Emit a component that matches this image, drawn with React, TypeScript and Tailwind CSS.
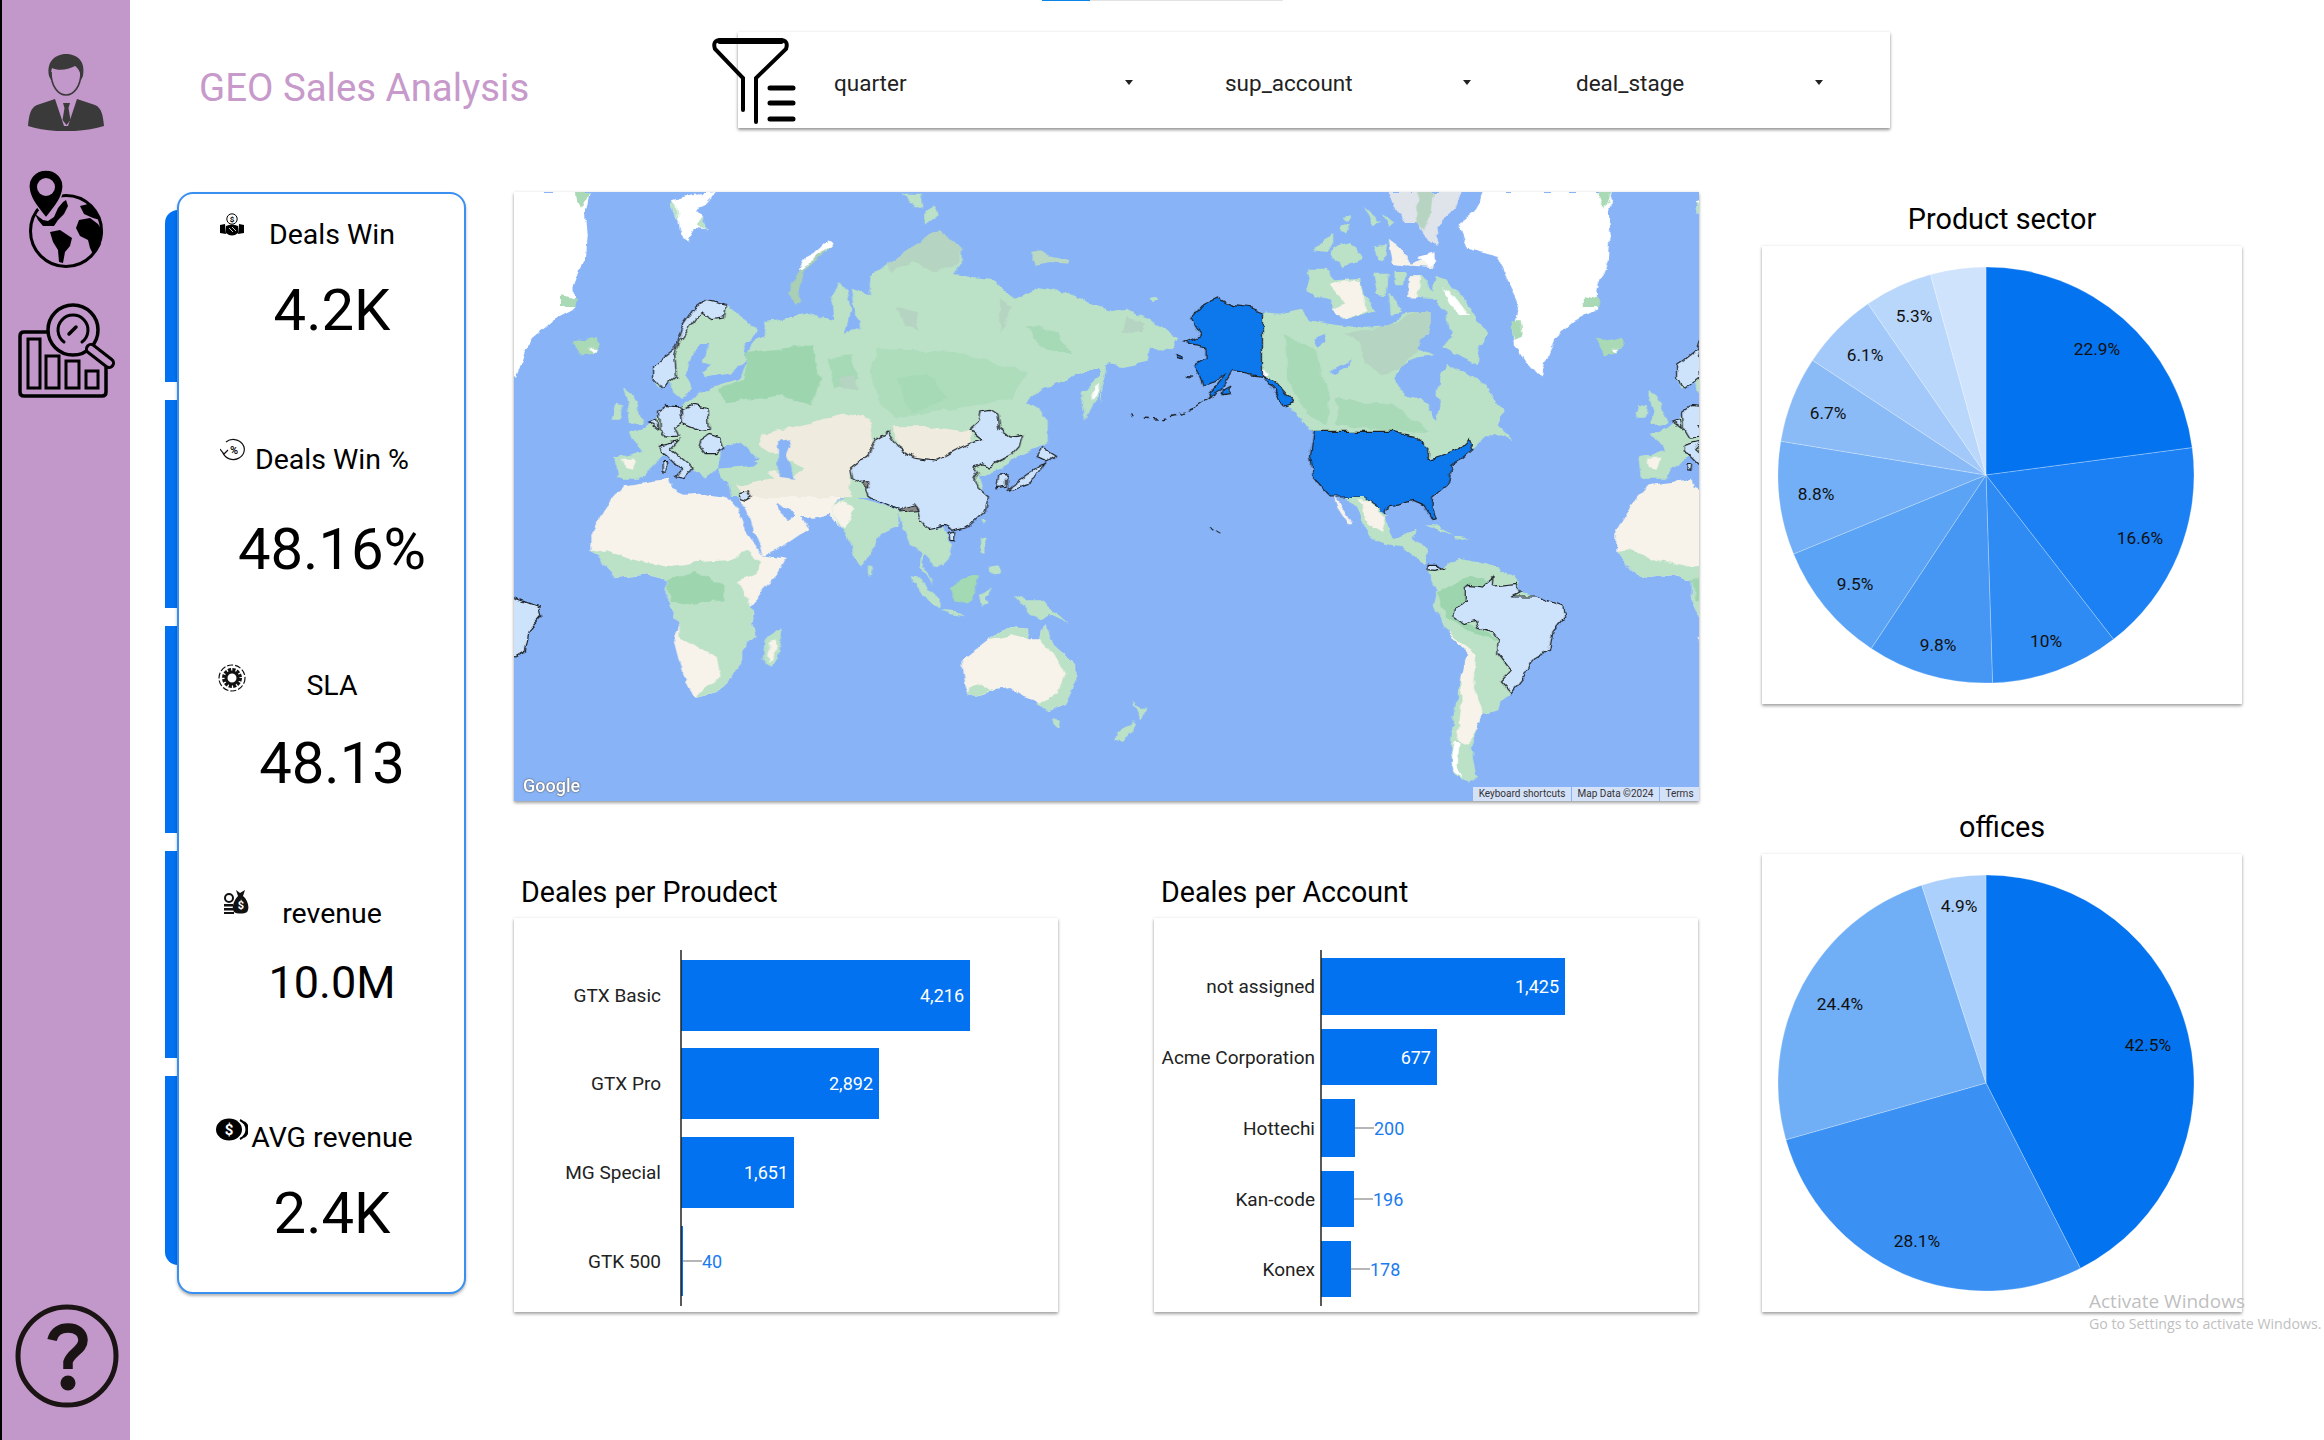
const SIDE = "#c297c9";
const LAND = "#bbe2c7";
const DEEP = "#9dd6ae";
const SAND = "#f7f3ea";
const PALE = "#cde2fb";
const LINE = "#1f2328";

function PersonIcon() {
  return (
    <svg width="76" height="77" viewBox="0 0 76 77" fill="#3a3a3a">
      <path d="M21 22 C18 6 29 0 38 0 C48 0 58 6 55 22 L53 26 C53 18 50 14 47 12 C40 16 30 17 24 14 C23 17 23 20 23 26Z" />
      <path d="M23 18 C23 32 30 41 38 41 C46 41 53 32 53 18" fill="none" stroke="#3a3a3a" strokeWidth="1.6" />
      <path d="M0 72 C1 62 2 54 9 51 L27 45 L36 72 L40 72 L49 45 L67 51 C74 54 75 62 76 72 C55 79 20 79 0 72Z" />
      <path d="M35 49 H42 L40.5 54 L42.5 66 L38.5 71 L34.5 66 L36.5 54Z" />
    </svg>
  );
}

function GlobeIcon() {
  return (
    <svg width="75" height="98" viewBox="0 0 75 98" fill="#000">
      <circle cx="38" cy="61" r="35.5" fill="none" stroke="#000" strokeWidth="3" />
      <path d="M7 44 L15 50 L20 51 L26 47 L30 38 L35 32 L38 30 L40 36 L36 44 L30 50 L26 56 L20 56 L15 56 L10 50Z" />
      <path d="M22 62 L32 60 L44 68 L42 76 L37 82 L35 93 L31 92 L30 80 L25 72Z" />
      <path d="M51 50 L62 48 L70 54 L75 62 L72 76 L65 84 L62 78 L60 70 L52 66 L48 58Z" />
      <path d="M52 36 L60 34 L68 42 L72 50 L65 48 L56 44Z" />
      <path d="M18 0 C7 0 0 9 1 18 C2 30 12 40 18 48 C24 40 34 30 35 18 C36 9 29 0 18 0Z" stroke={SIDE} strokeWidth="1.5" />
      <circle cx="18" cy="17" r="9" fill={SIDE} />
    </svg>
  );
}

function AnalyticsIcon() {
  return (
    <svg width="97" height="97" viewBox="0 0 97 97" fill="none" stroke="#000" strokeWidth="3.5" strokeLinecap="round">
      <path d="M29 31 H6 Q2 31 2 35 V91 Q2 95 6 95 H84 Q88 95 88 91 V66" />
      <rect x="10" y="38" width="12" height="49" strokeWidth="3" />
      <rect x="28" y="55" width="13" height="32" strokeWidth="3" />
      <rect x="48" y="60" width="13" height="27" strokeWidth="3" />
      <rect x="68" y="70" width="12" height="17" strokeWidth="3" />
      <circle cx="55" cy="29" r="25" />
      <path d="M46 41 A15 15 0 1 1 64 41" strokeWidth="3" />
      <path d="M51 33 L58 26" strokeWidth="3.5" />
      <path d="M73 48 L91 62" strokeWidth="12" />
      <path d="M73 48 L91 62" strokeWidth="6" stroke={SIDE} />
    </svg>
  );
}

function HelpIcon() {
  return (
    <svg width="104" height="104" viewBox="0 0 104 104" fill="none" stroke="#1b1414">
      <circle cx="52" cy="52" r="49" strokeWidth="5" />
      <path d="M37 36 C39 27 46 24 53 24 C62 24 68 29 68 36 C68 46 56 48 53 58 L53 65" strokeWidth="9.5" />
      <circle cx="53" cy="79" r="7.5" fill="#1b1414" stroke="none" />
    </svg>
  );
}

function FilterIcon() {
  return (
    <svg width="84" height="86" viewBox="0 0 84 86" fill="none" stroke="#000" strokeLinecap="round">
      <path d="M31 72 V40 L3 11 Q0 2 9 2 H68 Q77 2 74 11 L44 40 V84" strokeWidth="4" />
      <path d="M8 3 H69" strokeWidth="6" />
      <path d="M58 50 H81 M58 65 H81 M58 81 H81" strokeWidth="5" />
    </svg>
  );
}

function HandshakeCoin() {
  return (
    <svg width="24" height="24" viewBox="0 0 24 24">
      <circle cx="12" cy="6" r="5.2" fill="#fff" stroke="#000" strokeWidth="1" />
      <text x="12" y="9" textAnchor="middle" fontSize="8" fontWeight="700">$</text>
      <path d="M0 12 L5 11 L6 21 L0 20Z M24 12 L19 11 L18 21 L24 20Z M6 13 Q12 10 18 13 L18 20 Q12 25 6 20Z" />
      <path d="M9 15 L13 19 M12 14 L16 18" stroke="#fff" strokeWidth="0.8" />
    </svg>
  );
}

function PercentCycle() {
  return (
    <svg width="26" height="24" viewBox="0 0 26 24" fill="none" stroke="#111">
      <path d="M3 15 A11 10 0 1 0 6 4" strokeWidth="1.2" />
      <path d="M0 11 L4 16 L8 12" strokeWidth="1.2" />
      <text x="14" y="15.5" textAnchor="middle" fontSize="11" fill="#111" stroke="none" fontWeight="700">%</text>
    </svg>
  );
}

function GearBadge() {
  return (
    <svg width="28" height="28" viewBox="0 0 28 28" fill="none" stroke="#111">
      <circle cx="14" cy="14" r="13" strokeWidth="1.2" strokeDasharray="6 2" />
      <circle cx="14" cy="14" r="8" strokeWidth="4" strokeDasharray="3 1.2" />
      <circle cx="14" cy="14" r="6" strokeWidth="3" />
    </svg>
  );
}

function MoneyBag() {
  return (
    <svg width="25" height="24" viewBox="0 0 25 24" fill="#111">
      <path d="M12 0 L16 3 L21 0 L19 6 C24 10 26 18 23 22 C20 24 13 24 10 22 C7 18 10 10 14 6Z" />
      <text x="17" y="19" textAnchor="middle" fontSize="11" fill="#fff" fontWeight="700">$</text>
      <circle cx="5" cy="8" r="4" fill="none" stroke="#111" strokeWidth="2" />
      <path d="M0 14 H9 V16.5 H0Z M0 18 H9 V20.5 H0Z M0 22 H10 V24 H0Z" />
    </svg>
  );
}

function CoinStack() {
  return (
    <svg width="32" height="23" viewBox="0 0 32 23">
      <ellipse cx="13" cy="11.5" rx="13" ry="11" fill="#000" />
      <text x="13" y="17" textAnchor="middle" fontSize="15" fill="#fff" fontWeight="700">$</text>
      <path d="M24 2 A13 11 0 0 1 24 21 M28 4 A12 10 0 0 1 28 19" fill="none" stroke="#000" strokeWidth="2" />
    </svg>
  );
}

// traced from the map tile, coordinates are in a 3097x1827 box
function OldWorld() {
  return (
    <g>
      {/* svalbard, iceland, novaya zemlya */}
      <path fill="#fff" d="M410,25 L470,5 L530,0 L500,40 L470,50 L490,75 L505,115 L470,110 L455,150 L435,125 L430,85 L412,50Z" />
      <path fill={LAND} d="M410,25 L425,40 L430,85 L412,50Z M490,75 L505,115 L480,105Z M1010,5 L1065,5 L1070,50 L1030,30Z" />
      <path fill={LAND} d="M1095,40 L1110,70 L1075,98 L1072,70Z" />
      <path fill="#a9d9b5" d="M155,440 L185,445 L215,435 L225,460 L205,485 L175,490 L160,470Z" />
      <path fill="#fff" d="M195,470 L215,470 L205,482Z" />
      <path fill="#a9cfb5" d="M835,160 L780,185 L750,215 L745,240 L725,280 L715,305 L735,335 L750,330 L745,290 L755,240 L790,205Z" />
      <path fill="#fff" d="M825,143 L838,150 L830,165 L790,190 L755,235 L745,230 L760,195 L800,170Z" />
      <path fill="#b9d9c4" d="M1350,180 L1375,175 L1395,190 L1420,195 L1450,205 L1445,215 L1400,210 L1370,218 L1350,205Z" />

      {/* eurasia */}
      <path fill={LAND} d="M262,795 L300,790 L335,775 L300,725 L345,705 L380,670 L440,640 L490,600 L540,575 L590,560 L605,510 L625,450 L655,430 L660,390 L690,385 L770,360 L835,385 L830,320 L850,270 L870,300 L880,345 L865,430 L905,405 L890,360 L880,290 L930,310 L930,255 L975,215 L1085,130 L1110,115 L1170,170 L1170,215 L1150,250 L1250,260 L1310,320 L1375,285 L1440,300 L1520,340 L1568,365 L1568,512 L1500,540 L1430,570 L1380,590 L1340,630 L1375,650 L1395,690 L1395,750 L1320,795 L1270,830 L1215,850 L1225,890 L1200,915 L570,915 L560,860 L610,840 L640,810 L600,790 L545,770 L535,820 L500,860 L470,830 L450,820 L400,790 L380,800 L330,860 L270,860Z" />
      <path fill={LAND} d="M365,520 L420,470 L440,400 L500,325 L555,340 L590,370 L635,415 L620,440 L600,455 L610,500 L570,540 L495,555 L490,520 L510,450 L490,450 L465,490 L450,550 L465,590 L440,625 L415,600 L410,570 L375,590 L365,560Z" />
      <path fill={LAND} d="M285,590 L310,610 L330,660 L340,695 L295,700 L305,660Z M255,680 L265,635 L285,640 L280,680Z M1485,600 L1545,540 L1530,600 L1495,685Z" />
      <path fill="#fff" d="M1510,595 L1535,570 L1525,600 L1510,625Z" />
      <path fill="#f0ebdf" d="M650,725 L780,690 L870,665 L930,680 L935,740 L945,770 L925,790 L880,830 L880,915 L600,915 L570,860 L640,850 L680,830 L720,860 L760,830 L690,790 L640,760Z" />
      <path fill="#f0ebdf" d="M985,700 L1060,700 L1190,720 L1195,750 L1150,790 L1110,805 L1045,795 L1005,760Z" />
      <path fill={SAND} d="M285,800 L320,800 L310,830 L290,825Z" />
      <path fill={DEEP} d="M610,480 L780,460 L800,560 L780,640 L700,610 L640,620 L550,630 L535,590 L600,560Z" />
      <path fill="#aeddbc" d="M950,470 L1150,480 L1340,540 L1300,620 L1100,660 L1000,680 L960,640 L930,540Z" />
      <path fill="#a6dab7" d="M1000,560 L1080,540 L1130,620 L1040,665Z M820,500 L880,490 L900,560 L840,590Z M1340,400 L1420,420 L1460,490 L1380,470Z" />
      <path fill="#b5d4c1" d="M975,215 L1085,130 L1110,115 L1170,170 L1160,220 L1100,240 L1040,210 L990,240Z M1000,345 L1050,360 L1060,415 L1020,400Z M1270,320 L1300,350 L1275,420Z M850,560 L890,550 L895,590 L860,590Z" />
      <path fill="#88b3f7" d="M540,770 L590,750 L640,800 L590,815 L540,810Z M690,750 L725,745 L710,790 L735,860 L695,855 L690,800Z M510,450 L490,450 L465,490 L470,520 L495,540 L520,520 L490,510Z" />
      <path fill={LAND} d="M530,830 L640,820 L680,860 L590,880 L545,860Z" />

      {/* africa, arabia */}
      <path fill={SAND} d="M260,915 L290,880 L405,860 L410,890 L445,908 L480,905 L560,915 L575,935 L610,1025 L650,1090 L710,1100 L690,1145 L650,1195 L620,1245 L630,1335 L590,1375 L590,1415 L570,1455 L530,1500 L470,1515 L440,1445 L417,1345 L430,1295 L400,1215 L400,1165 L350,1150 L270,1160 L205,1080 L205,1015 L240,945Z" />
      <path fill={LAND} d="M205,1080 L240,1075 L300,1100 L400,1125 L480,1110 L560,1105 L610,1075 L645,1110 L630,1145 L585,1170 L615,1235 L620,1245 L630,1335 L590,1375 L590,1415 L570,1455 L530,1395 L430,1335 L430,1295 L400,1215 L400,1165 L350,1150 L270,1160Z" />
      <path fill={DEEP} d="M400,1165 L470,1140 L550,1180 L550,1225 L470,1235 L410,1225Z" />
      <path fill={LAND} d="M530,1500 L570,1455 L590,1415 L590,1375 L530,1395 L540,1455 L500,1490 L470,1515Z M695,1305 L703,1335 L690,1395 L670,1425 L652,1405 L658,1345Z" />
      <path fill={SAND} d="M672,1350 L690,1345 L682,1390 L665,1410 L662,1385Z" />
      <path fill={SAND} d="M585,915 L620,985 L650,1090 L700,1065 L770,1010 L745,975 L780,977 L825,965 L855,1010 L835,950 L855,915Z" />
      <path fill="#88b3f7" d="M690,930 L735,970 L715,985 L695,955Z" />

      {/* india, se asia, islands */}
      <path fill={LAND} d="M830,955 L860,915 L900,915 L1005,955 L1005,1005 L960,1025 L925,1095 L905,1130 L870,1035 L860,1015Z M925,1120 L935,1130 L935,1147 L925,1147Z" />
      <path fill={SAND} d="M830,955 L860,925 L890,950 L860,1010Z" />
      <path fill={LAND} d="M1005,960 L1050,945 L1080,1010 L1125,1005 L1145,1085 L1110,1125 L1075,1085 L1065,1110 L1100,1185 L1080,1155 L1060,1120 L1065,1085 L1035,1060 L1020,1015Z" />
      <path fill={LAND} d="M1035,1155 L1060,1160 L1115,1225 L1115,1250 L1080,1225Z M1115,1253 L1150,1257 L1185,1273 L1140,1267Z M1215,1205 L1255,1190 L1235,1215 L1240,1235 L1220,1245Z M1305,1205 L1340,1225 L1380,1225 L1445,1290 L1400,1265 L1380,1280 L1350,1265Z M1220,1040 L1235,1040 L1235,1080 L1222,1075Z M1240,1125 L1265,1120 L1268,1145 L1250,1147Z M1225,980 L1235,985 L1228,1000Z" />
      <path fill="#a3d9b3" d="M1140,1190 L1200,1145 L1215,1155 L1200,1205 L1185,1235 L1150,1225Z" />

      {/* australia */}
      <path fill={SAND} d="M1172,1405 L1240,1345 L1270,1320 L1300,1305 L1340,1310 L1345,1345 L1375,1345 L1388,1295 L1410,1355 L1465,1415 L1470,1465 L1440,1535 L1395,1557 L1360,1525 L1335,1515 L1300,1485 L1255,1490 L1210,1515 L1185,1510 L1175,1445Z" />
      <path fill={LAND} d="M1388,1295 L1410,1355 L1465,1415 L1470,1465 L1440,1535 L1395,1557 L1365,1540 L1420,1505 L1440,1445 L1410,1385 L1375,1345Z M1240,1345 L1270,1320 L1300,1305 L1340,1310 L1345,1345 L1300,1330Z M1405,1585 L1430,1585 L1425,1610 L1415,1610Z M1190,1490 L1225,1480 L1250,1490 L1210,1515 L1185,1510Z" />

      {/* highlighted countries */}
      <g fill={PALE} stroke={LINE} strokeWidth="1.2">
        <path vectorEffect="non-scaling-stroke" d="M1215,840 L1205,825 L1225,815 L1240,825 L1300,790 L1320,765 L1330,730 L1300,735 L1270,710 L1265,670 L1245,655 L1220,660 L1215,690 L1190,715 L1220,740 L1170,765 L1105,805 L1045,795 L1005,765 L975,720 L945,740 L925,790 L880,830 L885,860 L915,880 L925,910 L945,925 L1010,955 L1050,945 L1060,985 L1080,1010 L1125,1000 L1150,1015 L1190,1000 L1230,960 L1240,915 L1215,890 L1205,860Z" />
        <path vectorEffect="non-scaling-stroke" d="M1135,1025 L1155,1020 L1150,1043 L1140,1043Z" />
        <path vectorEffect="non-scaling-stroke" d="M365,520 L420,470 L440,400 L470,350 L500,325 L555,340 L550,375 L520,380 L490,360 L470,385 L430,450 L420,490 L425,555 L385,590 L365,560Z" />
        <path vectorEffect="non-scaling-stroke" d="M378,658 L400,640 L435,645 L440,690 L420,705 L430,735 L395,738 L380,710Z" />
        <path vectorEffect="non-scaling-stroke" d="M437,650 L465,638 L505,650 L508,715 L490,718 L440,695Z" />
        <path vectorEffect="non-scaling-stroke" d="M350,690 L370,682 L375,712Z" />
        <path vectorEffect="non-scaling-stroke" d="M485,750 L510,730 L540,740 L548,768 L530,785 L500,785 L482,760Z" />
        <path vectorEffect="non-scaling-stroke" d="M380,760 L430,745 L410,770 L465,825 L445,860 L425,855 L440,835 L400,790 L380,780Z" />
        <path vectorEffect="non-scaling-stroke" d="M390,812 L402,812 L400,838 L390,836Z" />
        <path vectorEffect="non-scaling-stroke" d="M1380,765 L1415,790 L1385,810 L1365,800Z" />
        <path vectorEffect="non-scaling-stroke" d="M1385,815 L1365,850 L1340,875 L1290,895 L1300,880 L1350,840Z" />
        <path vectorEffect="non-scaling-stroke" d="M1270,845 L1290,850 L1290,885 L1265,890Z" />
        <path vectorEffect="non-scaling-stroke" d="M590,905 L612,900 L620,915 L605,925 L590,920Z" />
      </g>
      <path fill="#888" stroke={LINE} strokeWidth="1" vectorEffect="non-scaling-stroke" d="M1010,960 L1022,946 L1047,938 L1052,956Z M910,872 L925,872 L925,888 L915,888Z" />
    </g>
  );
}

function NewWorld() {
  return (
    <g transform="translate(1531,0)">
      {/* greenland */}
      <path fill="#fff" d="M990,30 L1000,0 L1340,0 L1330,60 L1335,130 L1330,200 L1300,290 L1305,350 L1240,390 L1190,440 L1150,555 L1115,510 L1085,460 L1080,410 L1095,330 L1060,250 L1040,195 L960,170 L935,95 L975,60Z" />
      <path fill="#a9d9b5" d="M1075,385 L1100,385 L1105,430 L1085,440Z M1265,310 L1310,320 L1305,345 L1265,345Z M1300,0 L1340,0 L1320,50Z" />

      {/* arctic islands */}
      <path fill="#dfe3ea" d="M755,0 L945,0 L930,50 L880,100 L885,165 L860,150 L830,90 L800,90 L770,40Z" />
      <path fill="#b6d4c1" d="M830,0 L870,0 L865,60 L850,120 L830,90Z" />
      <path fill={LAND} d="M560,175 L610,120 L610,165 L590,180Z M625,160 L660,150 L690,200 L630,225 L600,180Z M690,45 L735,90 L715,100Z M740,70 L770,90 L755,105Z M715,160 L750,155 L745,205 L725,200Z M630,75 L660,70 L650,90Z M630,100 L655,95 L640,125Z" />
      <path fill={SAND} d="M755,140 L790,170 L810,215 L880,185 L870,225 L790,220 L765,215Z" />
      <path fill="#fff" d="M830,195 L870,182 L880,205 L860,222Z" />
      <path fill={LAND} d="M545,230 L590,230 L615,265 L680,260 L690,310 L720,360 L640,385 L605,350 L605,320 L590,315 L560,320 L542,290Z" />
      <path fill={SAND} d="M600,280 L640,265 L680,270 L690,330 L700,360 L640,385 L605,350 L640,330Z" />
      <path fill={LAND} d="M715,245 L755,245 L750,310 L725,305Z M770,240 L800,240 L795,280 L770,280Z M810,250 L840,250 L880,320 L850,320 L810,315Z M875,255 L905,265 L970,350 L1015,430 L990,470 L985,520 L895,465 L925,420 L910,400 L900,350 L870,310Z M755,300 L790,360 L760,365Z" />
      <path fill="#fff" d="M895,285 L925,310 L965,370 L935,365 L915,330Z" />
      <path fill={SAND} d="M810,250 L835,250 L830,320 L808,318Z" />

      {/* north america */}
      <path fill={LAND} d="M0,362 L70,350 L130,385 L175,420 L210,435 L190,475 L130,470 L125,510 L60,525 L20,515 L5,585 L0,640Z M125,318 L150,312 L155,325 L130,330Z" />
      <path fill="#b5d4c1" d="M70,375 L120,395 L110,420 L60,420Z" />
      <path fill={LAND} d="M425,360 L470,365 L525,350 L550,385 L620,400 L680,405 L755,400 L790,370 L830,360 L865,360 L865,420 L835,440 L835,470 L870,490 L830,495 L790,520 L770,560 L790,600 L860,640 L880,690 L890,640 L880,600 L905,515 L960,550 L990,555 L1055,660 L1040,700 L1080,745 L1040,730 L1010,730 L975,770 L860,800 L560,725 L530,690 L490,640 L425,545Z" />
      <path fill="#b5d4c1" d="M640,425 L755,400 L830,360 L865,360 L865,420 L835,440 L835,470 L780,530 L740,550 L690,510 L680,450Z" />
      <path fill="#a9dab8" d="M480,430 L560,470 L600,620 L590,700 L540,660 L490,560Z M620,620 L770,640 L860,720 L760,716 L620,700Z" />
      <path fill="#88b3f7" d="M555,440 L590,425 L595,445 L570,465Z M600,540 L660,505 L640,530 L615,545Z" />
      <path fill="#fff" d="M425,530 L445,548 L425,550Z" />

      {/* alaska, usa */}
      <g fill="#0f78ec" stroke={LINE} strokeWidth="1.2">
        <path vectorEffect="non-scaling-stroke" d="M425,360 L400,348 L345,340 L310,318 L265,345 L238,380 L265,430 L225,450 L275,465 L275,500 L245,520 L260,550 L270,580 L300,570 L330,545 L280,620 L235,655 L320,590 L350,535 L385,545 L425,550 L460,570 L505,630 L480,640 L455,590 L425,550Z" />
        <path vectorEffect="non-scaling-stroke" d="M558,718 L768,718 L820,730 L860,770 L858,805 L885,795 L940,768 L965,740 L975,770 L945,800 L920,820 L905,880 L870,915 L868,945 L880,977 L868,980 L850,940 L820,925 L790,935 L755,945 L745,970 L725,945 L690,915 L605,915 L580,885 L555,850 L548,790Z" />
        <path vectorEffect="non-scaling-stroke" d="M197,488 L215,495 L215,500 L200,497Z M228,550 L242,552 L238,558Z M325,590 L342,580 L338,605 L322,608Z" />
      </g>
      <path fill="none" stroke={LINE} strokeWidth="1.5" strokeDasharray="5 4" vectorEffect="non-scaling-stroke" d="M82,665 L90,672 M115,678 L160,682 L215,665 L240,652 M285,1007 L322,1030" />

      {/* mexico and caribbean */}
      <path fill={LAND} d="M640,915 L690,915 L750,970 L745,975 L765,1040 L800,1025 L825,1012 L820,1045 L855,1070 L850,1115 L830,1100 L790,1065 L750,1060 L700,1030 L680,965Z" />
      <path fill={SAND} d="M675,925 L700,925 L745,975 L735,1020 L705,1000Z M612,915 L625,930 L660,1000 L650,1000 L620,945Z" />
      <path fill={LAND} d="M850,1000 L880,1000 L925,1027 L890,1015Z M925,1030 L965,1037 L930,1043Z" />

      {/* south america */}
      <path fill={LAND} d="M855,1130 L885,1133 L940,1100 L1010,1115 L1090,1155 L1100,1200 L1210,1245 L1215,1275 L1185,1315 L1175,1375 L1130,1405 L1110,1455 L1075,1505 L1050,1525 L1045,1555 L1000,1565 L990,1605 L970,1665 L985,1755 L960,1770 L925,1745 L915,1685 L925,1565 L945,1455 L960,1385 L905,1315 L870,1240 L880,1195Z" />
      <path fill={SAND} d="M905,1315 L960,1365 L985,1385 L975,1485 L1000,1565 L990,1605 L965,1655 L935,1645 L945,1535 L945,1455 L960,1385Z" />
      <path fill="#fff" d="M925,1650 L940,1650 L935,1720 L950,1760 L925,1740 L918,1690Z" />
      <path fill={DEEP} d="M880,1205 L960,1155 L1000,1155 L1030,1185 L1000,1225 L930,1245 L925,1275 L990,1305 L1040,1345 L960,1315 L905,1275Z" />
      <g fill={PALE} stroke={LINE} strokeWidth="1.2">
        <path vectorEffect="non-scaling-stroke" d="M1030,1155 L1028,1185 L1090,1177 L1100,1200 L1075,1215 L1140,1215 L1210,1245 L1215,1275 L1185,1315 L1175,1375 L1130,1405 L1110,1455 L1075,1505 L1047,1470 L1075,1435 L1040,1385 L1040,1345 L1025,1320 L990,1305 L985,1285 L950,1295 L925,1275 L930,1245 L955,1230 L955,1190 L965,1180 L1000,1185Z" />
        <path vectorEffect="non-scaling-stroke" d="M858,1120 L880,1120 L900,1130 L875,1135 L858,1133Z" />
      </g>
      <path fill={LAND} d="M85,1520 L100,1550 L122,1550 L105,1587 L92,1555Z M90,1587 L85,1615 L58,1650 L38,1643 L45,1625Z" />
    </g>
  );
}

function WorldMap() {
  return (
    <div className="relative h-[609px] w-full overflow-hidden bg-[#88b3f7] shadow-[0_2px_3px_rgba(0,0,0,0.35),0_0_3px_rgba(0,0,0,0.08)]">
      <svg className="block h-full w-full" viewBox="0 0 3097 1827" preserveAspectRatio="none">
        <defs>
          {/* roughens the traced polygons into coastline */}
          <filter id="coast" filterUnits="userSpaceOnUse" x="-100" y="-100" width="3300" height="2030">
            <feTurbulence type="fractalNoise" baseFrequency="0.028" numOctaves="3" seed="4" result="noise" />
            <feDisplacementMap in="SourceGraphic" in2="noise" scale="20" xChannelSelector="R" yChannelSelector="G" />
          </filter>
        </defs>
        <g filter="url(#coast)">
          <g transform="translate(-2676,0)"><NewWorld /></g>
          <OldWorld />
          <NewWorld />
          <g transform="translate(2676,0)"><OldWorld /></g>
        </g>
      </svg>
      <span className="absolute bottom-[5px] left-[9px] text-[18px] font-medium leading-5 text-white [text-shadow:0_0_2px_#555,0_0_1px_#555]">Google</span>
      <div className="absolute bottom-0 right-0 flex h-[14px] gap-[1px] text-[10px] leading-[14px] text-[#333]">
        <span className="w-[98px] bg-[#d3e1f9] text-center">Keyboard shortcuts</span>
        <span className="w-[87px] bg-[#d3e1f9] text-center">Map Data ©2024</span>
        <span className="w-[39px] bg-[#d3e1f9] text-center">Terms</span>
      </div>
    </div>
  );
}

type Bar = { label: string; value: string; top: number; height: number; width: number; inside: boolean };

const productBars: Bar[] = [
  { label: "GTX Basic", value: "4,216", top: 42, height: 71, width: 289, inside: true },
  { label: "GTX Pro", value: "2,892", top: 130, height: 71, width: 198, inside: true },
  { label: "MG Special", value: "1,651", top: 219, height: 71, width: 113, inside: true },
  { label: "GTK 500", value: "40", top: 308, height: 70, width: 2, inside: false },
];

const accountBars: Bar[] = [
  { label: "not assigned", value: "1,425", top: 40, height: 57, width: 244, inside: true },
  { label: "Acme Corporation", value: "677", top: 111, height: 56, width: 116, inside: true },
  { label: "Hottechi", value: "200", top: 181, height: 58, width: 34, inside: false },
  { label: "Kan-code", value: "196", top: 253, height: 56, width: 33, inside: false },
  { label: "Konex", value: "178", top: 323, height: 56, width: 30, inside: false },
];

function BarCard({ title, bars, labelGap }: { title: string; bars: Bar[]; labelGap: number }) {
  const axis = 167;
  return (
    <div className="w-[544px]">
      <h2 className="mb-[6px] pl-[7px] text-[28.6px] font-normal leading-10 text-black">{title}</h2>
      <div className="h-[394px] bg-white shadow-[0_2px_3px_rgba(0,0,0,0.35),0_0_3px_rgba(0,0,0,0.08)]">
        <svg width="544" height="394" className="block overflow-visible font-[Roboto,sans-serif]">
          {bars.map((b) => {
            const mid = b.top + b.height / 2;
            return (
              <g key={b.label}>
                <text x={axis - labelGap} y={mid} textAnchor="end" dominantBaseline="central" fontSize="19" fill="#222">{b.label}</text>
                <rect x={axis} y={b.top} width={b.width} height={b.height} fill="#0372f0" />
                {b.inside ? (
                  <text x={axis + b.width - 6} y={mid} textAnchor="end" dominantBaseline="central" fontSize="18" fill="#fff">{b.value}</text>
                ) : (
                  <>
                    <line x1={axis + b.width} x2={axis + b.width + 19} y1={mid} y2={mid} stroke="#9e9e9e" strokeWidth="1.5" />
                    <text x={axis + b.width + 19} y={mid} dominantBaseline="central" fontSize="18" fill="#1a7bee">{b.value}</text>
                  </>
                )}
              </g>
            );
          })}
          <line x1={axis} x2={axis} y1="32" y2="388" stroke="#222" strokeWidth="1.5" />
        </svg>
      </div>
    </div>
  );
}

type Slice = { pct: number; color: string; label?: string; x?: number; y?: number };

const sectorSlices: Slice[] = [
  { pct: 22.9, color: "#0473ef", label: "22.9%", x: 335, y: 103 },
  { pct: 16.6, color: "#1a80f3", label: "16.6%", x: 378, y: 292 },
  { pct: 10, color: "#2e8bf3", label: "10%", x: 284, y: 395 },
  { pct: 9.8, color: "#4697f4", label: "9.8%", x: 176, y: 399 },
  { pct: 9.5, color: "#5ba3f5", label: "9.5%", x: 93, y: 338 },
  { pct: 8.8, color: "#72aff6", label: "8.8%", x: 54, y: 248 },
  { pct: 6.7, color: "#8abbf7", label: "6.7%", x: 66, y: 167 },
  { pct: 6.1, color: "#a2c9f9", label: "6.1%", x: 103, y: 109 },
  { pct: 5.3, color: "#b9d7fb", label: "5.3%", x: 152, y: 70 },
  { pct: 4.3, color: "#cfe3fc" },
];

const officeSlices: Slice[] = [
  { pct: 42.5, color: "#0473ef", label: "42.5%", x: 386, y: 191 },
  { pct: 28.1, color: "#3a90f3", label: "28.1%", x: 155, y: 387 },
  { pct: 24.4, color: "#70aff6", label: "24.4%", x: 78, y: 150 },
  { pct: 5, color: "#abd0fb", label: "4.9%", x: 197, y: 52 },
];

function PieCard({ title, slices, titleGap }: { title: string; slices: Slice[]; titleGap: string }) {
  const cx = 224;
  const cy = 229;
  const r = 208;
  let angle = -Math.PI / 2;
  return (
    <div className={titleGap}>
      <h2 className="mb-[7px] text-center text-[28.8px] font-normal leading-10 text-black">{title}</h2>
      <div className="h-[458px] bg-white shadow-[0_2px_3px_rgba(0,0,0,0.35),0_0_3px_rgba(0,0,0,0.08)]">
        <svg width="480" height="458" className="block">
          {slices.map((s) => {
            const start = angle;
            angle += (s.pct / 100) * Math.PI * 2;
            const large = s.pct > 50 ? 1 : 0;
            const d = `M${cx} ${cy} L${cx + r * Math.cos(start)} ${cy + r * Math.sin(start)} A${r} ${r} 0 ${large} 1 ${cx + r * Math.cos(angle)} ${cy + r * Math.sin(angle)}Z`;
            return <path key={s.color} d={d} fill={s.color} stroke="#fff" strokeOpacity="0.35" strokeWidth="0.7" />;
          })}
          {slices.map((s) =>
            s.label ? (
              <text key={s.label} x={s.x} y={s.y} textAnchor="middle" dominantBaseline="central" fontSize="17.3" fill="#111">{s.label}</text>
            ) : null,
          )}
        </svg>
      </div>
    </div>
  );
}

const kpis = [
  { label: "Deals Win", value: "4.2K", icon: <HandshakeCoin />, iconClass: "ml-[20px] -mt-[2px]", rowClass: "", valueClass: "mt-[19px] text-[58px]" },
  { label: "Deals Win %", value: "48.16%", icon: <PercentCycle />, iconClass: "ml-[20px] -mt-[2px]", rowClass: "mt-[94px]", valueClass: "mt-[33px] text-[58px]" },
  { label: "SLA", value: "48.13", icon: <GearBadge />, iconClass: "ml-[18px] -mt-[2px]", rowClass: "mt-[81px]", valueClass: "mt-[21px] text-[58px]" },
  { label: "revenue", value: "10.0M", icon: <MoneyBag />, iconClass: "ml-[24px] -mt-[4px]", rowClass: "mt-[95px]", valueClass: "mt-[13px] text-[45px]" },
  { label: "AVG revenue", value: "2.4K", icon: <CoinStack />, iconClass: "ml-[16px] mt-0", rowClass: "mt-[99px]", valueClass: "mt-[19px] text-[58px]" },
];

function KpiColumn() {
  return (
    <div className="ml-[35px] flex w-[301px] items-start">
      <div className="mt-[18px] flex w-[13px] shrink-0 flex-col gap-[18px]">
        <div className="h-[172px] rounded-tl-[14px] bg-[#0372f0]" />
        <div className="h-[208px] bg-[#0372f0]" />
        <div className="h-[207px] bg-[#0372f0]" />
        <div className="h-[207px] bg-[#0372f0]" />
        <div className="h-[189px] rounded-bl-[14px] bg-[#0372f0]" />
      </div>
      <div className="-ml-[1px] h-[1102px] w-[289px] rounded-[16px] border-2 border-[#3a90f0] bg-white pl-[21px] pt-[21px] shadow-[0_2px_3px_rgba(0,0,0,0.3)]">
        {kpis.map((k) => (
          <div key={k.label} className={k.rowClass}>
            <div className="grid">
              <div className={`col-start-1 row-start-1 justify-self-start ${k.iconClass}`}>{k.icon}</div>
              <div className="col-start-1 row-start-1 justify-self-center text-[28.5px] leading-10 text-black">{k.label}</div>
            </div>
            <div className={`text-center leading-[72px] text-black ${k.valueClass}`}>{k.value}</div>
          </div>
        ))}
      </div>
    </div>
  );
}

function FilterField({ label, width, gap }: { label: string; width: string; gap: string }) {
  return (
    <div className={`flex items-center justify-between ${width} ${gap}`}>
      <span className="text-[22.5px] leading-6 text-[#222]">{label}</span>
      <span className="h-0 w-0 border-x-[4px] border-t-[5px] border-x-transparent border-t-[#222]" />
    </div>
  );
}

export default function App() {
  return (
    <div className="relative flex h-[1440px] w-full overflow-hidden bg-white font-[Roboto,sans-serif]">
      <aside className="flex w-[130px] shrink-0 flex-col border-l-2 border-black bg-[#c297c9]">
        <div className="ml-[26px] mt-[54px]"><PersonIcon /></div>
        <div className="ml-[26px] mt-[39px]"><GlobeIcon /></div>
        <div className="ml-[16px] mt-[33px]"><AnalyticsIcon /></div>
        <div className="mb-[32px] ml-[13px] mt-auto"><HelpIcon /></div>
      </aside>

      <main className="min-w-0 flex-1">
        <header className="relative flex h-[192px] items-start">
          <div className="absolute left-[912px] top-0 flex h-[1px] w-[241px] bg-[#e3e3e3]">
            <div className="h-full w-[48px] bg-[#0a84e8]" />
          </div>
          <h1 className="ml-[69px] mt-[66px] w-[539px] text-[38.4px] font-normal leading-[44px] text-[#c79acb]">GEO Sales Analysis</h1>
          <div className="relative mt-[32px] flex h-[96px] w-[1152px] items-center bg-white pl-[96px] pt-[5px] shadow-[0_2px_3px_rgba(0,0,0,0.4),0_0_3px_rgba(0,0,0,0.08)]">
            <div className="absolute -left-[26px] top-[6px]"><FilterIcon /></div>
            <FilterField label="quarter" width="w-[299px]" gap="mr-[92px]" />
            <FilterField label="sup_account" width="w-[246px]" gap="mr-[105px]" />
            <FilterField label="deal_stage" width="w-[247px]" gap="" />
          </div>
        </header>

        <div className="flex items-start">
          <KpiColumn />
          <div className="ml-[48px] w-[1185px]">
            <WorldMap />
            <div className="mt-[71px] flex gap-[96px]">
              <BarCard title="Deales per Proudect" bars={productBars} labelGap={20} />
              <BarCard title="Deales per Account" bars={accountBars} labelGap={6} />
            </div>
          </div>
          <div className="ml-[63px] w-[480px]">
            <PieCard title="Product sector" slices={sectorSlices} titleGap="mt-[7px]" />
            <PieCard title="offices" slices={officeSlices} titleGap="mt-[103px]" />
          </div>
        </div>
      </main>

      <div className="pointer-events-none absolute left-[2089px] top-[1288px] font-['Open_Sans',sans-serif] text-[#bfbfbf]">
        <div className="text-[19px] leading-[26px]">Activate Windows</div>
        <div className="whitespace-nowrap text-[14.2px] leading-5">Go to Settings to activate Windows.</div>
      </div>
    </div>
  );
}
